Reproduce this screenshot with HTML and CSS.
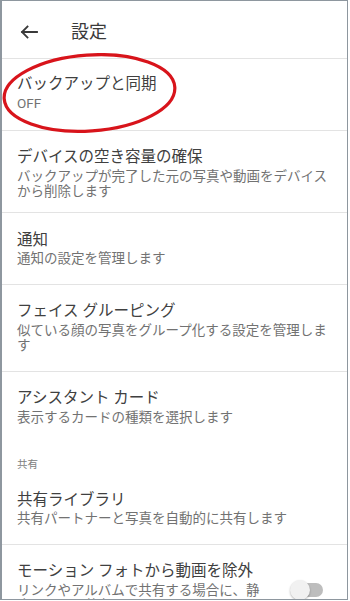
FILE: index.html
```html
<!DOCTYPE html>
<html lang="ja">
<head>
<meta charset="utf-8">
<title>設定</title>
<link rel="stylesheet" href="styles.css">
</head>
<body>
<div class="frame">
  <header class="appbar">
    <svg class="back" width="18" height="14" viewBox="0 0 18 14" aria-hidden="true">
      <path d="M17 7H2M7.5 1.5L2 7l5.5 5.5" fill="none" stroke="#3a3a3a" stroke-width="1.8" stroke-linecap="square"/>
    </svg>
    <h1 class="title">設定</h1>
  </header>

  <div class="item item-first">
    <div class="text">
      <div class="primary">バックアップと同期</div>
      <div class="secondary">OFF</div>
    </div>
  </div>
  <div class="item item-tight">
    <div class="text">
      <div class="primary">デバイスの空き容量の確保</div>
      <div class="secondary">バックアップが完了した元の写真や動画をデバイスから削除します</div>
    </div>
  </div>
  <div class="item">
    <div class="text">
      <div class="primary">通知</div>
      <div class="secondary">通知の設定を管理します</div>
    </div>
  </div>
  <div class="item">
    <div class="text">
      <div class="primary">フェイス グルーピング</div>
      <div class="secondary">似ている顔の写真をグループ化する設定を管理します</div>
    </div>
  </div>
  <div class="item">
    <div class="text">
      <div class="primary">アシスタント カード</div>
      <div class="secondary">表示するカードの種類を選択します</div>
    </div>
  </div>

  <div class="section">共有</div>

  <div class="item item-flat">
    <div class="text">
      <div class="primary">共有ライブラリ</div>
      <div class="secondary">共有パートナーと写真を自動的に共有します</div>
    </div>
  </div>
  <div class="item item-toggle">
    <div class="text">
      <div class="primary">モーション フォトから動画を除外</div>
      <div class="secondary">リンクやアルバムで共有する場合に、静止画のみを共有します</div>
    </div>
    <div class="switch" aria-hidden="true"><span class="track"></span><span class="thumb"></span></div>
  </div>

  <svg class="mark" width="180" height="90" viewBox="0 0 180 90" aria-hidden="true">
    <ellipse cx="87.5" cy="40" rx="85.5" ry="38" transform="rotate(-4 87.5 40)" fill="none" stroke="#d8141b" stroke-width="3.2"/>
  </svg>
</div>
</body>
</html>
```

FILE: styles.css
```css
html, body {
  margin: 0;
  padding: 0;
  background: #ffffff;
}

body {
  font-family: Roboto, "Noto Sans CJK JP", "Noto Sans", sans-serif;
  color: #404040;
}

.frame {
  position: relative;
  box-sizing: border-box;
  width: 348px;
  height: 600px;
  overflow: hidden;
  background: #ffffff;
  border-top: 1px solid #8e979f;
  border-left: 2px solid #8e979f;
  border-right: 1px solid #8e979f;
  border-bottom: 1px solid #8e979f;
}

.appbar {
  display: flex;
  align-items: center;
  box-sizing: border-box;
  height: 57px;
  padding: 5px 0 0 18px;
}

.back {
  display: block;
  flex: none;
}

.title {
  margin: 0 0 0 33px;
  font-size: 18px;
  font-weight: 400;
  line-height: 24px;
  color: #3a3a3a;
}

.item {
  display: flex;
  align-items: center;
  border-top: 1px solid #e3e3e3;
  padding: 16.5px 14px 17px 15px;
}

.item-first {
  padding-top: 15px;
  padding-bottom: 18.5px;
}

.item-tight {
  padding-bottom: 12.5px;
}

.item-flat {
  border-top: none;
}

.text {
  flex: 1;
  min-width: 0;
}

.primary {
  font-size: 15.5px;
  line-height: 20px;
  color: #404040;
}

.secondary {
  margin-top: 1.5px;
  font-size: 13.5px;
  line-height: 15.5px;
  color: #727272;
}

.section {
  padding: 15px 15px 0;
  font-size: 10.5px;
  line-height: 16px;
  color: #808080;
}

.item-toggle {
  padding-right: 24px;
}

.item-toggle .text {
  flex: 0 0 250px;
}

.switch {
  position: relative;
  flex: none;
  width: 33px;
  height: 20px;
  margin: 6px 0 0 23px;
}

.track {
  position: absolute;
  left: 8px;
  right: 0;
  top: 3px;
  height: 14px;
  border-radius: 7px;
  background: #bdbdbd;
}

.thumb {
  position: absolute;
  left: 0;
  top: 0;
  width: 20px;
  height: 20px;
  border-radius: 50%;
  background: #f1f1f1;
  box-shadow: 0 1px 2px rgba(0, 0, 0, 0.3);
}

.mark {
  position: absolute;
  left: 0;
  top: 52px;
}
```
